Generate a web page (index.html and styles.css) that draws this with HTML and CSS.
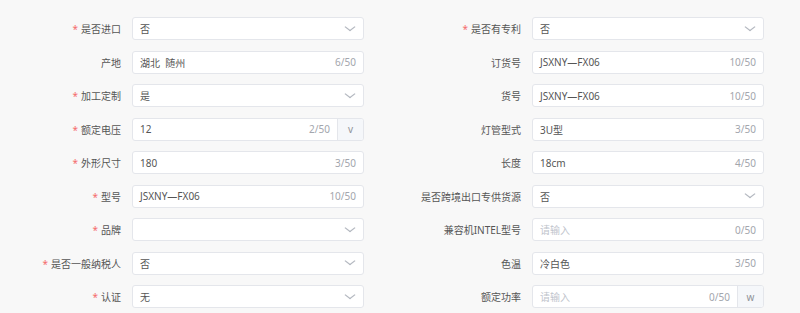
FILE: index.html
```html
<!DOCTYPE html>
<html lang="zh-CN">
<head>
  <meta charset="UTF-8">
  <meta name="viewport" content="width=device-width, initial-scale=1">
  <title>商品属性</title>
  <link rel="stylesheet" href="styles.css">
</head>
<body>
  <form class="attr-form">
    <!-- row 1 -->
    <div class="item"><label class="label req">是否进口</label><div class="field select"><span class="val">否</span><i class="arrow"></i></div></div>
    <div class="item"><label class="label req">是否有专利</label><div class="field select"><span class="val">否</span><i class="arrow"></i></div></div>

    <div class="item"><label class="label">产地</label><div class="field"><span class="val">湖北&nbsp;&nbsp;随州</span><span class="count">6/50</span></div></div>
    <div class="item"><label class="label">订货号</label><div class="field"><span class="val">JSXNY—FX06</span><span class="count">10/50</span></div></div>

    <div class="item"><label class="label req">加工定制</label><div class="field select"><span class="val">是</span><i class="arrow"></i></div></div>
    <div class="item"><label class="label">货号</label><div class="field"><span class="val">JSXNY—FX06</span><span class="count">10/50</span></div></div>

    <div class="item"><label class="label req">额定电压</label><div class="field"><span class="val">12</span><span class="count">2/50</span><span class="append">v</span></div></div>
    <div class="item"><label class="label">灯管型式</label><div class="field"><span class="val">3U型</span><span class="count">3/50</span></div></div>

    <div class="item"><label class="label req">外形尺寸</label><div class="field"><span class="val">180</span><span class="count">3/50</span></div></div>
    <div class="item"><label class="label">长度</label><div class="field"><span class="val">18cm</span><span class="count">4/50</span></div></div>

    <div class="item"><label class="label req">型号</label><div class="field"><span class="val">JSXNY—FX06</span><span class="count">10/50</span></div></div>
    <div class="item"><label class="label">是否跨境出口专供货源</label><div class="field select"><span class="val">否</span><i class="arrow"></i></div></div>

    <div class="item"><label class="label req">品牌</label><div class="field select"><span class="val"></span><i class="arrow"></i></div></div>
    <div class="item"><label class="label">兼容机INTEL型号</label><div class="field"><span class="val empty">请输入</span><span class="count">0/50</span></div></div>

    <div class="item"><label class="label req">是否一般纳税人</label><div class="field select"><span class="val">否</span><i class="arrow"></i></div></div>
    <div class="item"><label class="label">色温</label><div class="field"><span class="val">冷白色</span><span class="count">3/50</span></div></div>

    <div class="item"><label class="label req">认证</label><div class="field select"><span class="val">无</span><i class="arrow"></i></div></div>
    <div class="item"><label class="label">额定功率</label><div class="field"><span class="val empty">请输入</span><span class="count">0/50</span><span class="append">w</span></div></div>
  </form>
</body>
</html>
```

FILE: styles.css
```css
* { box-sizing: border-box; }
body {
  margin: 0;
  background-color: #f8f8f8;
  font-family: "Noto Sans", "Noto Sans CJK SC", sans-serif;
  font-size: 10px;
  color: #606266;
}
.attr-form {
  display: grid;
  grid-template-columns: 400px 400px;
  row-gap: 10.5px;
  padding-top: 17px;
}
.item {
  display: flex;
  align-items: center;
  height: 23px;
}
.label {
  width: 121px;
  margin-right: 11px;
  text-align: right;
  color: #555;
  white-space: nowrap;
}
.label.req::before {
  content: "*";
  color: #f56c6c;
  margin-right: 3px;
}
.field {
  width: 232px;
  height: 23px;
  display: flex;
  align-items: center;
  background-color: #fff;
  border: 1px solid #e4e6eb;
  border-radius: 3px;
  overflow: hidden;
}
.val {
  flex: 1;
  padding-left: 7px;
  color: #555;
}
.val.empty {
  color: #c0c4cc;
}
.count {
  padding-right: 7px;
  color: #a3a6ad;
}
.append {
  width: 26px;
  height: 100%;
  display: flex;
  align-items: center;
  justify-content: center;
  background-color: #f5f7fa;
  border-left: 1px solid #e4e6eb;
  color: #909399;
}
.arrow {
  width: 6px;
  height: 6px;
  margin-right: 10px;
  margin-top: -4px;
  border-right: 1px solid #b4b8c0;
  border-bottom: 1px solid #b4b8c0;
  transform: scaleX(1.3) rotate(45deg);
}
```
